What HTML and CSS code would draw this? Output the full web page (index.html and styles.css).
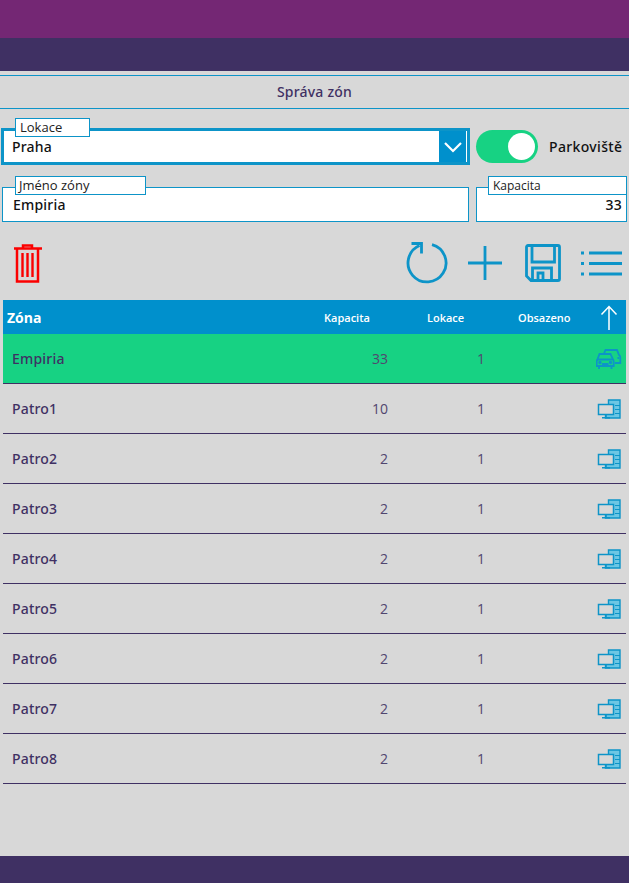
FILE: index.html
```html
<!DOCTYPE html>
<html lang="cs">
<head>
<meta charset="utf-8">
<title>Správa zón</title>
<link rel="stylesheet" href="styles.css">
</head>
<body>
<svg class="defs" width="0" height="0" aria-hidden="true">
  <symbol id="pc" viewBox="0 0 24 20">
    <path d="M11.500 5V1H23v18H8.500v-3" fill="#6cc6e4" stroke="#0d94c8" stroke-width="1.400"/>
    <path d="M18 6.500h5M18 10.500h5M18 14.500h5" stroke="#0d94c8" stroke-width="1" fill="none"/>
    <rect x="1.500" y="5.500" width="15" height="10" fill="#d8d8d8" stroke="#0d94c8" stroke-width="1.500"/>
    <path d="M9 15.500v3M5 18.800h8" stroke="#0d94c8" stroke-width="1.500" fill="none"/>
  </symbol>
</svg>
<div class="app">
  <header class="bar-top"></header>
  <div class="bar-sub"></div>
  <h1 class="title">Správa zón</h1>
  <section class="form">
    <div class="form-row first">
      <div class="field select">
        <span class="label label-lokace">Lokace</span>
        <span class="value">Praha</span>
        <span class="chevron"><svg width="20" height="12" viewBox="0 0 20 12"><path d="M2 2l8 8 8-8" fill="none" stroke="#fff" stroke-width="2.200"/></svg></span>
      </div>
      <div class="switch-group">
        <span class="switch"><span class="knob"></span></span>
        <span class="switch-label">Parkoviště</span>
      </div>
    </div>
    <div class="form-row second">
      <div class="field name">
        <span class="label label-name">Jméno zóny</span>
        <span class="value">Empiria</span>
      </div>
      <div class="field capacity">
        <span class="label label-capacity">Kapacita</span>
        <span class="value">33</span>
      </div>
    </div>
  </section>
  <section class="toolbar">
    <svg class="ico-trash" width="30" height="40" viewBox="0 0 30 40" fill="none" stroke="#fb0000" stroke-width="2"><path d="M1 4.500h28M10 4V1.500h9V4" stroke-width="2.500"/><path d="M4 5v32.500h21V5" stroke-width="2.500"/><path d="M9.500 9v24M14.500 9v24M19.500 9v24" stroke-width="2.400"/></svg>
    <div class="tools">
      <svg class="tool-refresh" width="42" height="46" viewBox="0 0 42 46" fill="none" stroke="#0d94c8" stroke-width="2.800"><path d="M26 4.600A19 19 0 1 1 13.500 5.500"/><path d="M5.500 3.500h10v10"/></svg>
      <svg class="tool-plus" width="34" height="34" viewBox="0 0 34 34" fill="none" stroke="#0d94c8" stroke-width="2.800"><path d="M0 17h34M17 0v34"/></svg>
      <svg class="tool-save" width="36" height="38" viewBox="0 0 36 38" fill="none" stroke="#0d94c8" stroke-width="2.800"><path d="M3 1.500h30a1.500 1.500 0 0 1 1.500 1.500v32a1.500 1.500 0 0 1-1.500 1.500H6l-4.500-4.500V3A1.500 1.500 0 0 1 3 1.500z"/><path d="M7 2v16h22.500V2"/><path d="M7.500 36V24h19v12"/><path d="M13 36v-7h5v7"/></svg>
      <svg class="tool-list" width="41" height="25" viewBox="0 0 41 25" fill="none" stroke="#0d94c8" stroke-width="2.800"><path d="M8 2h33M8 12.500h33M8 23h33"/><path d="M0 2h3M0 12.500h3M0 23h3"/></svg>
    </div>
  </section>
  <section class="table">
    <div class="thead">
      <span class="th-zone">Zóna</span>
      <span class="th th-cap">Kapacita</span>
      <span class="th th-loc">Lokace</span>
      <span class="th th-occ">Obsazeno</span>
      <svg class="th-arrow" width="18" height="26" viewBox="0 0 18 26" fill="none" stroke="#fff" stroke-width="1.500"><path d="M9 25V1.500M1.500 9.500L9 1.500l7.500 8"/></svg>
    </div>
    <div class="row selected">
      <span class="c-name">Empiria</span><span class="c-cap">33</span><span class="c-loc">1</span>
      <svg class="c-ico c-car" width="26" height="20" viewBox="0 0 26 20" fill="none" stroke="#0d94c8" stroke-width="1.800"><path d="M8 4.500l1.500-3.500h11.500l2 5c1 .5 1.300 1.500 1.300 2.500V14H19"/><path d="M3.500 5h11l2.500 5.500c.5.500.7 1 .7 2v4.500H.7v-4.500c0-1 .2-1.500.7-2z"/><path d="M1.500 10.500h15M3 17v3M15.500 17v3M6 15h6.500"/><circle cx="4" cy="13.500" r=".8"/><circle cx="14.500" cy="13.500" r=".8"/><path d="M21.500 9h1.500"/></svg>
    </div>
    <div class="row"><span class="c-name">Patro1</span><span class="c-cap">10</span><span class="c-loc">1</span><svg class="c-ico" width="24" height="20"><use href="#pc"/></svg></div>
    <div class="row"><span class="c-name">Patro2</span><span class="c-cap">2</span><span class="c-loc">1</span><svg class="c-ico" width="24" height="20"><use href="#pc"/></svg></div>
    <div class="row"><span class="c-name">Patro3</span><span class="c-cap">2</span><span class="c-loc">1</span><svg class="c-ico" width="24" height="20"><use href="#pc"/></svg></div>
    <div class="row"><span class="c-name">Patro4</span><span class="c-cap">2</span><span class="c-loc">1</span><svg class="c-ico" width="24" height="20"><use href="#pc"/></svg></div>
    <div class="row"><span class="c-name">Patro5</span><span class="c-cap">2</span><span class="c-loc">1</span><svg class="c-ico" width="24" height="20"><use href="#pc"/></svg></div>
    <div class="row"><span class="c-name">Patro6</span><span class="c-cap">2</span><span class="c-loc">1</span><svg class="c-ico" width="24" height="20"><use href="#pc"/></svg></div>
    <div class="row"><span class="c-name">Patro7</span><span class="c-cap">2</span><span class="c-loc">1</span><svg class="c-ico" width="24" height="20"><use href="#pc"/></svg></div>
    <div class="row"><span class="c-name">Patro8</span><span class="c-cap">2</span><span class="c-loc">1</span><svg class="c-ico" width="24" height="20"><use href="#pc"/></svg></div>
  </section>
  <footer class="bar-bottom"></footer>
</div>
</body>
</html>
```
FILE: styles.css
```css
* { box-sizing: border-box; }
html, body { margin: 0; padding: 0; height: 100%; }
body { background: #d8d8d8; font-family: "Open Sans", sans-serif; color: #111; overflow: hidden; }
.defs { position: absolute; }
.app { height: 883px; display: flex; flex-direction: column; }
.bar-top { height: 38px; background: #742774; }
.bar-sub { height: 33px; background: #3f3063; }
.title { margin: 4px 0 0; height: 34px; border-top: 1px solid #0d94c8; border-bottom: 1px solid #0d94c8; font-family: "Noto Sans", sans-serif; font-size: 14px; font-weight: 500; letter-spacing: 0.2px; color: #3f3063; text-align: center; line-height: 31px; }
.form { display: flex; flex-direction: column; }
.form-row { display: flex; }
.form-row.first { margin-top: 19px; padding-left: 1px; }
.form-row.second { margin-top: 22px; padding-left: 2px; }
.field { position: relative; background: #fff; border: 1px solid #0d94c8; display: flex; align-items: center; }
.select { width: 469px; height: 37px; border-width: 3px; padding-left: 8px; }
.name { width: 467px; height: 35px; padding-left: 10px; }
.capacity { width: 151px; height: 35px; margin-left: 7px; justify-content: flex-end; padding-right: 4px; }
.value { font-family: "Noto Sans", sans-serif; font-size: 14px; font-weight: 500; letter-spacing: 0.2px; color: #111; }
.label { position: absolute; background: #fff; border: 1px solid #0d94c8; font-size: 13px; line-height: 17px; height: 19px; color: #222; padding-left: 4px; white-space: nowrap; }
.label-lokace { left: 11px; top: -13px; width: 75px; }
.label-name { left: 12px; top: -12px; width: 131px; padding-left: 3px; }
.label-capacity { left: 11px; top: -12px; width: 139px; font-size: 12px; }
.chevron { position: absolute; right: 0; top: 0; bottom: 0; width: 27px; margin-right: 1px; background: #0090cc; display: flex; align-items: center; justify-content: center; }
.switch-group { display: flex; align-items: center; margin-left: 6px; }
.switch { width: 62px; height: 33px; border-radius: 17px; background: #17d283; position: relative; display: block; }
.knob { position: absolute; right: 3px; top: 3px; width: 27px; height: 27px; border-radius: 50%; background: #fff; }
.switch-label { margin-left: 11px; font-family: "Noto Sans", sans-serif; font-size: 14px; font-weight: 500; letter-spacing: 0.35px; color: #111; }
.toolbar { display: flex; justify-content: space-between; align-items: flex-start; margin-top: 18px; height: 60px; padding: 4px 7px 0 13px; }
.tools { display: flex; align-items: center; height: 38px; }
.tool-plus { margin-left: 20px; }
.tool-save { margin-left: 23px; }
.tool-list { margin-left: 20px; }
.table { padding: 0 3px; flex: 1; }
.thead { height: 34px; background: #0090cc; display: flex; align-items: center; position: relative; color: #fff; }
.th-zone { margin-left: 4px; font-size: 14px; font-weight: 700; }
.th { position: absolute; font-size: 11px; font-weight: 600; }
.th-cap { left: 321px; }
.th-loc { left: 424px; }
.th-occ { left: 515px; }
.th-arrow { position: absolute; left: 597px; top: 5px; }
.row { height: 50px; border-bottom: 1px solid #3f3063; display: grid; grid-template-columns: 1fr 60px 97px 136px; align-items: center; padding: 0 5px 0 9px; color: #3f3063; font-size: 14px; }
.row.selected { background: #17d283; }
.c-name { font-family: "Noto Sans", sans-serif; font-weight: 500; letter-spacing: 0.2px; }
.c-cap { text-align: right; color: #51466f; }
.c-loc { text-align: right; color: #51466f; }
.c-ico { justify-self: end; }
.c-car { margin-right: -1px; }
.bar-bottom { height: 27px; background: #3f3063; }
```
